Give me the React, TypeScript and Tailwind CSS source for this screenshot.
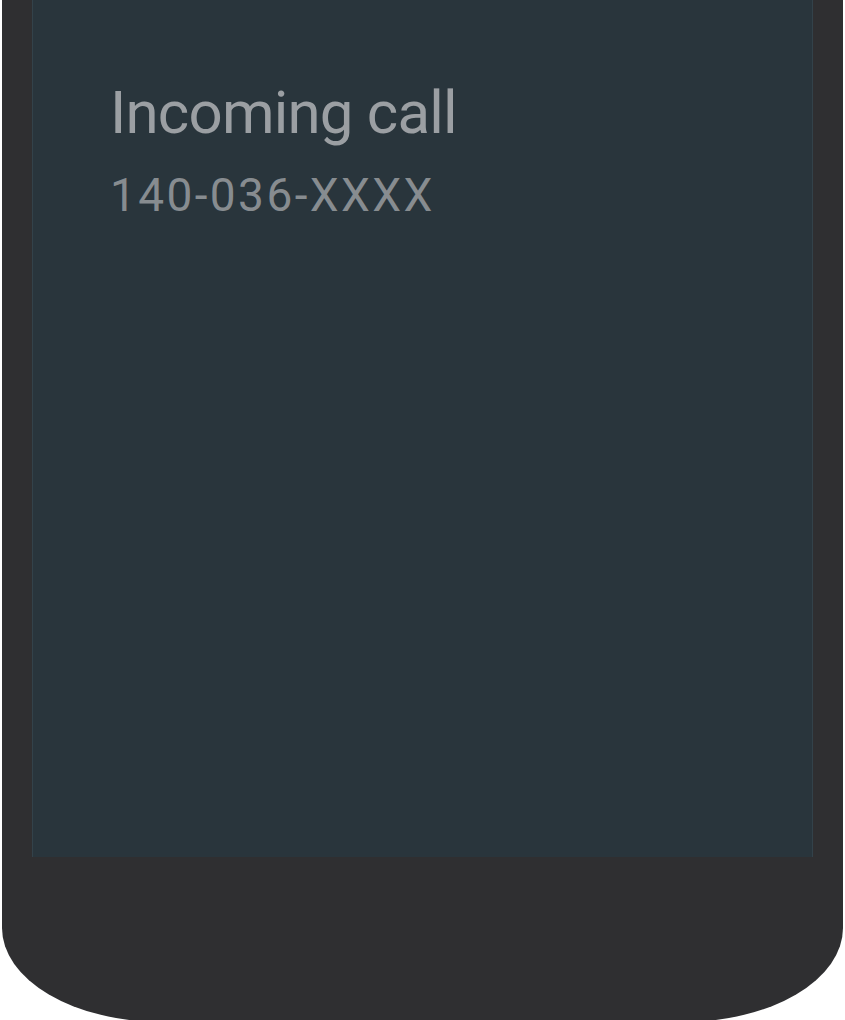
export default function App() {
  return (
    <div className="w-[845px] h-[1020px] bg-white overflow-hidden">
      <div className="ml-[2px] w-[841px] h-[1022px] bg-[#2f2f31] px-[30px] rounded-bl-[160px_94px] rounded-br-[160px_94px]">
        <div className="h-[857px] bg-[#29353c] border-x border-[#33424a] pl-[77px] pt-[78px] font-['Roboto',sans-serif]">
          <div className="text-[60px] leading-[70px] tracking-[-0.8px] text-[#9b9fa3]">Incoming call</div>
          <div className="text-[46px] leading-[56px] mt-[19px] tracking-[2.4px] text-[#878c90]">140-036-XXXX</div>
        </div>
      </div>
    </div>
  );
}
